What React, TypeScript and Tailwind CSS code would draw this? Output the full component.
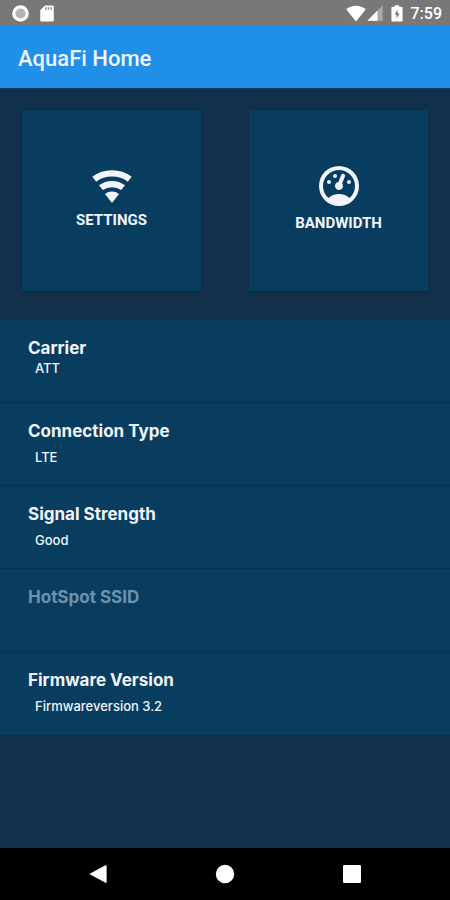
import React from 'react';

interface DeviceInfo {
  label: string;
  value: string;
  compact?: boolean;
  disabled?: boolean;
}

const deviceInfo: DeviceInfo[] = [
  { label: 'Carrier', value: 'ATT', compact: true },
  { label: 'Connection Type', value: 'LTE' },
  { label: 'Signal Strength', value: 'Good' },
  { label: 'HotSpot SSID', value: '', disabled: true },
  { label: 'Firmware Version', value: 'Firmwareversion 3.2' },
];

const WifiIcon = () => (
  <svg viewBox="0 0 40 34" className="w-10 h-[34px]" fill="currentColor" aria-hidden="true">
    <path d="M0.3 7.8A33.4 33.4 0 0 1 39.7 7.8L35.8 12.7A27 27 0 0 0 4.2 12.7Z" />
    <path d="M7 16.2A22 22 0 0 1 33 16.2L29.2 21.1A16 16 0 0 0 10.8 21.1Z" />
    <path d="M13 24.9A11.8 11.8 0 0 1 27 24.9L20.6 33.3Q20 34 19.4 33.3Z" />
  </svg>
);

const GaugeIcon = () => (
  <svg viewBox="2 2 20 20" className="w-10 h-10" fill="currentColor" aria-hidden="true">
    <path d="M12,2A10,10 0 0,0 2,12A10,10 0 0,0 12,22A10,10 0 0,0 22,12A10,10 0 0,0 12,2M12,4A8,8 0 0,1 20,12C20,14.4 19,16.5 17.3,18C15.9,16.7 14,16 12,16C10,16 8.2,16.7 6.7,18C5,16.5 4,14.4 4,12A8,8 0 0,1 12,4M14,5.89C13.62,5.9 13.26,6.15 13.1,6.54L11.81,9.77L11.71,10C11,10.13 10.41,10.6 10.14,11.26C9.73,12.29 10.23,13.45 11.26,13.86C12.29,14.27 13.45,13.77 13.86,12.74C14.12,12.08 14,11.32 13.57,10.76L13.67,10.5L14.96,7.29L14.97,7.26C15.17,6.75 14.92,6.17 14.41,5.96C14.28,5.91 14.15,5.89 14,5.89M10,6A1,1 0 0,0 9,7A1,1 0 0,0 10,8A1,1 0 0,0 11,7A1,1 0 0,0 10,6M7,9A1,1 0 0,0 6,10A1,1 0 0,0 7,11A1,1 0 0,0 8,10A1,1 0 0,0 7,9M17,9A1,1 0 0,0 16,10A1,1 0 0,0 17,11A1,1 0 0,0 18,10A1,1 0 0,0 17,9Z" />
  </svg>
);

const StatusBar = () => (
  <div className="flex items-center justify-between h-[26px] pl-3 pr-2 bg-[#787878] text-white">
    <div className="flex items-center gap-[11px]">
      <svg viewBox="0 0 17 17" className="w-[17px] h-[17px]" aria-hidden="true">
        <circle cx="8.5" cy="8.5" r="6.7" fill="#b4b4b4" stroke="#fff" strokeWidth="3.2" />
      </svg>
      <svg viewBox="0 0 14 17" className="w-[14px] h-[17px]" aria-hidden="true">
        <path d="M5 0.5H12.5A1.3 1.3 0 0 1 13.8 1.8V15.2A1.3 1.3 0 0 1 12.5 16.5H1.5A1.3 1.3 0 0 1 0.2 15.2V5.3Z" fill="#fff" />
        <path d="M5 2.3H6.5V4.7H5ZM7.7 2.3H9.2V4.7H7.7ZM10.4 2.3H11.9V4.7H10.4Z" fill="#8c8c8c" />
      </svg>
    </div>
    <div className="flex items-center">
      <svg viewBox="0 0 20 17" className="w-5 h-[17px]" aria-hidden="true">
        <path d="M10 16.5L0.2 4.3C5.5 -0.4 14.5 -0.4 19.8 4.3Z" fill="#fff" />
      </svg>
      <svg viewBox="0 0 16 16" className="w-4 h-4 ml-px" aria-hidden="true">
        <path d="M0.3 15.7L15.7 0.3V15.7Z" fill="#a9a9a9" />
        <path d="M0.3 15.7L10.5 5.5V15.7Z" fill="#fff" />
      </svg>
      <svg viewBox="0 0 12 17" className="w-3 h-[17px] ml-2" aria-hidden="true">
        <path d="M3.8 0.3H8.2V1.8H10.4A1.2 1.2 0 0 1 11.6 3V15.4A1.2 1.2 0 0 1 10.4 16.6H1.6A1.2 1.2 0 0 1 0.4 15.4V3A1.2 1.2 0 0 1 1.6 1.8H3.8Z" fill="#fff" />
        <path d="M6.6 4.4L3.6 9.7H5.6V13.6L8.6 8.4H6.6Z" fill="#787878" />
      </svg>
      <span className="ml-2 pt-0.5 text-base leading-6 font-medium">7:59</span>
    </div>
  </div>
);

interface TileProps {
  label: string;
  children: React.ReactNode;
}

const Tile: React.FC<TileProps> = ({ label, children }) => (
  <button type="button" className="flex flex-1 flex-col items-center justify-center h-[181px] pb-1 bg-[#083d5f] shadow-sm">
    {children}
    <span className="mt-2 text-[15px] leading-[18px] font-bold">{label}</span>
  </button>
);

const NavigationBar = () => (
  <nav className="flex items-center justify-between h-[52px] px-[87px] bg-black text-white">
    <button type="button" aria-label="Back" className="p-px">
      <svg viewBox="0 0 20 20" className="w-5 h-5" fill="currentColor">
        <path d="M17.5 1.3Q18.6 0.8 18.6 2V18Q18.6 19.2 17.5 18.7L2.2 10.6Q1.2 10 2.2 9.4Z" />
      </svg>
    </button>
    <button type="button" aria-label="Home" className="p-px">
      <svg viewBox="0 0 20 20" className="w-5 h-5" fill="currentColor">
        <circle cx="10" cy="10" r="9.2" />
      </svg>
    </button>
    <button type="button" aria-label="Recent apps" className="p-px">
      <svg viewBox="0 0 20 20" className="w-5 h-5" fill="currentColor">
        <rect x="1" y="1" width="18" height="18" rx="1.2" />
      </svg>
    </button>
  </nav>
);

export default function App() {
  return (
    <div className="flex flex-col min-h-screen bg-[#12304a] text-[#f1f4fb] font-['Roboto',sans-serif]">
      <StatusBar />
      <header className="flex items-center h-[63px] px-[18px] pt-1 bg-[#208fe8] border-b border-[#0f3a61]">
        <h1 className="text-[22px] leading-7 font-medium">AquaFi Home</h1>
      </header>

      <main className="flex-1">
        <div className="flex gap-12 px-[22px] pt-[21px] pb-[29px]">
          <Tile label="SETTINGS">
            <WifiIcon />
          </Tile>
          <Tile label="BANDWIDTH">
            <GaugeIcon />
          </Tile>
        </div>

        <dl className="bg-[#083d5f] divide-y divide-[#07324f] font-['Inter',sans-serif]">
          {deviceInfo.map((item) => (
            <div key={item.label} className="min-h-[83px] px-7 pt-4">
              <dt className={`text-[17px] leading-6 font-bold ${item.disabled ? 'text-[#6f92ac]' : ''}`}>{item.label}</dt>
              <dd className={`pl-[7px] text-[13px] leading-4 font-medium ${item.compact ? '' : 'pt-1.5'}`}>{item.value}</dd>
            </div>
          ))}
        </dl>
      </main>

      <NavigationBar />
    </div>
  );
}
